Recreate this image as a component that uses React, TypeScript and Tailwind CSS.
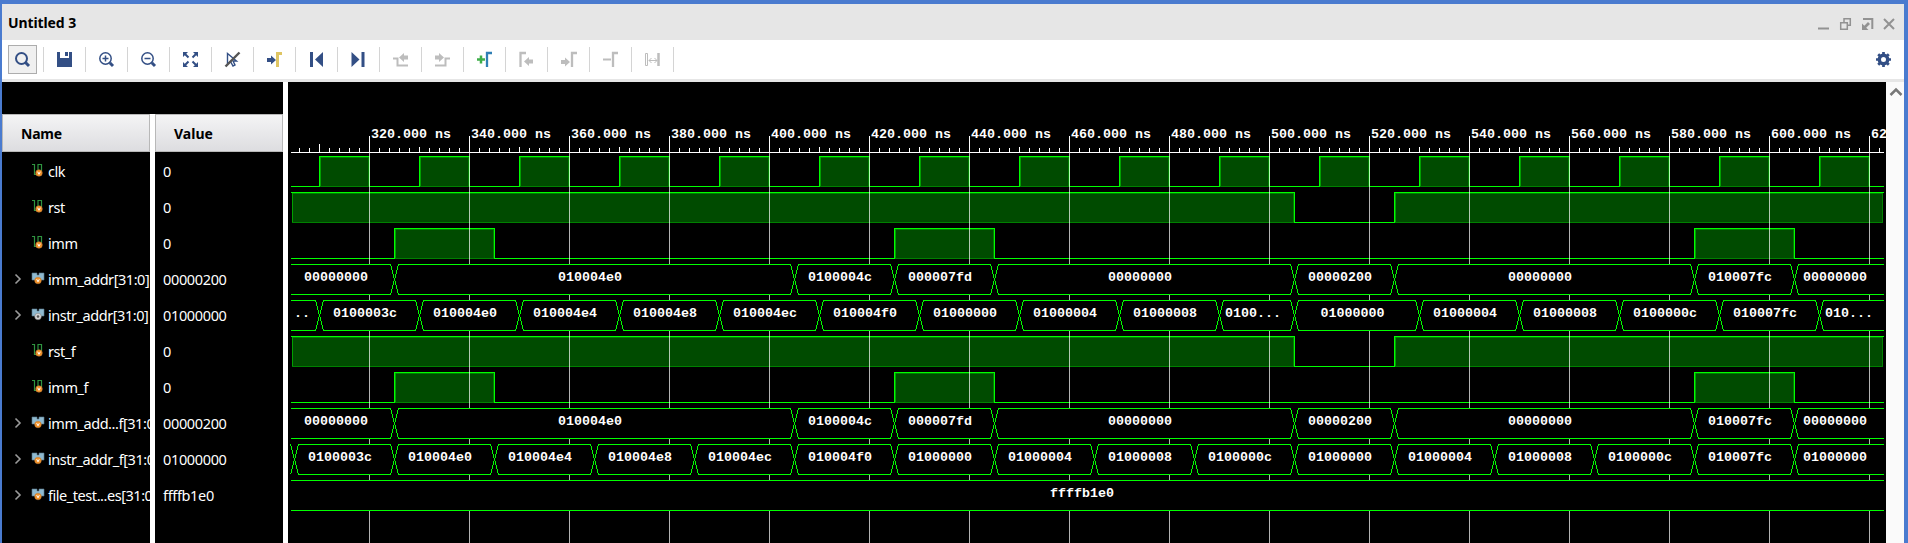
import React from "react";

type Seg = { to: number; label: string; at?: number };
type Signal = {
  name: string;
  value: string;
  kind: "bit" | "bus" | "busReg";
  high?: [number, number][];
  start?: number;
  segs?: Seg[];
};

const X0 = 291;
const X1 = 1884;
const clkHigh: [number, number][] = Array.from({ length: 16 }, (_, i) => [319 + i * 100, 369 + i * 100]);
const rstHigh: [number, number][] = [[X0, 1294], [1394, X1]];
const immHigh: [number, number][] = [[394, 494], [894, 994], [1694, 1794]];
const immSegs: Seg[] = [
  { to: 394, label: "00000000", at: 304 },
  { to: 794, label: "010004e0" },
  { to: 894, label: "0100004c" },
  { to: 994, label: "000007fd" },
  { to: 1294, label: "00000000" },
  { to: 1394, label: "00000200" },
  { to: 1694, label: "00000000" },
  { to: 1794, label: "010007fc" },
  { to: X1, label: "00000000" },
];
const instrSegs: Seg[] = [
  { to: 319, label: "..", at: 294 },
  { to: 419, label: "0100003c" },
  { to: 519, label: "010004e0" },
  { to: 619, label: "010004e4" },
  { to: 719, label: "010004e8" },
  { to: 819, label: "010004ec" },
  { to: 919, label: "010004f0" },
  { to: 1019, label: "01000000" },
  { to: 1119, label: "01000004" },
  { to: 1219, label: "01000008" },
  { to: 1294, label: "0100...", at: 1225 },
  { to: 1419, label: "01000000" },
  { to: 1519, label: "01000004" },
  { to: 1619, label: "01000008" },
  { to: 1719, label: "0100000c" },
  { to: 1819, label: "010007fc" },
  { to: X1, label: "010...", at: 1825 },
];
const instrFSegs: Seg[] = [
  "0100003c", "010004e0", "010004e4", "010004e8", "010004ec", "010004f0", "01000000", "01000004",
  "01000008", "0100000c", "01000000", "01000004", "01000008", "0100000c", "010007fc", "01000000",
].map((label, i) => ({ to: i === 15 ? X1 : 394 + i * 100, label }));

const signals: Signal[] = [
  { name: "clk", value: "0", kind: "bit", high: clkHigh },
  { name: "rst", value: "0", kind: "bit", high: rstHigh },
  { name: "imm", value: "0", kind: "bit", high: immHigh },
  { name: "imm_addr[31:0]", value: "00000200", kind: "bus", segs: immSegs },
  { name: "instr_addr[31:0]", value: "01000000", kind: "busReg", segs: instrSegs },
  { name: "rst_f", value: "0", kind: "bit", high: rstHigh },
  { name: "imm_f", value: "0", kind: "bit", high: immHigh },
  { name: "imm_add...f[31:0]", value: "00000200", kind: "bus", segs: immSegs },
  { name: "instr_addr_f[31:0]", value: "01000000", kind: "bus", start: 294, segs: instrFSegs },
  { name: "file_test...es[31:0]", value: "ffffb1e0", kind: "bus", segs: [{ to: X1, label: "ffffb1e0", at: 1050 }] },
];

const BLUE = "#334f85";
const GREY = "#bdbdbd";

function BitWave({ y, high }: { y: number; high: [number, number][] }) {
  const b = y + 30;
  let d = "";
  let x = X0;
  high.forEach(([a, c]) => {
    if (a > X0) d += `M${x} ${b + 0.5}H${a + 0.5}V${y + 0.5}`;
    else d += `M${X0} ${y + 0.5}`;
    d += `H${c === X1 ? X1 : c + 0.5}`;
    if (c !== X1) d += `V${b + 0.5}`;
    x = c;
  });
  if (x !== X1) d += `M${x} ${b + 0.5}H${X1}`;
  return (
    <g shapeRendering="crispEdges">
      {high.map(([a, c]) => {
        const l = a + 1;
        const r = c === X1 ? X1 - 1 : c;
        return (
          <g key={a}>
            <rect x={l} y={y + 1} width={r - l} height={30} fill="#008000" />
            <rect x={l} y={y + 1} width={1} height={29} fill="#00a000" />
            <rect x={l + 1} y={y + 2} width={r - l - 2} height={28} fill="#004b00" />
          </g>
        );
      })}
      <path d={d} fill="none" stroke="#00ff00" />
    </g>
  );
}

function BusWave({ y, start, segs }: { y: number; start?: number; segs: Seg[] }) {
  const t = y + 0.5;
  const b = y + 30.5;
  const cuts = segs.slice(0, -1).map((s) => s.to);
  if (start) cuts.unshift(start);
  let d = "";
  let x = X0;
  cuts.forEach((c) => {
    if (c - 4 > x) d += `M${x} ${t}H${c - 3}M${x} ${b}H${c - 3}`;
    const m = c + 0.5;
    d += `M${m - 4} ${t}L${m - 2} ${y + 8}L${m + 2} ${y + 23}L${m + 4} ${b}`;
    d += `M${m - 4} ${b}L${m - 2} ${y + 23}L${m + 2} ${y + 8}L${m + 4} ${t}`;
    x = c + 4;
  });
  d += `M${x} ${t}H${X1}M${x} ${b}H${X1}`;
  return (
    <g>
      <rect x={X0} y={y} width={X1 - X0} height={31} fill="#000" />
      <path d={d} fill="none" stroke="#00ff00" shapeRendering="crispEdges" />
      {segs.map((s, i) => {
        const from = i === 0 ? start ?? X0 : segs[i - 1].to;
        return (
          <text key={i} x={s.at ?? (from + s.to) / 2 - 36} y={y + 17}>
            {s.label}
          </text>
        );
      })}
    </g>
  );
}

function Waves() {
  const ticks = Array.from({ length: 159 }, (_, i) => 299 + i * 10);
  const majors = Array.from({ length: 16 }, (_, i) => 369 + i * 100);
  return (
    <svg
      width="1598"
      height="461"
      viewBox="288 82 1598 461"
      className="block bg-black font-['Liberation_Mono',monospace] text-[13.33px] font-bold"
      fill="#fff"
      xmlSpace="preserve"
    >
      <rect x={X0} y={152} width={X1 - X0} height={1} />
      {ticks.map((x) => {
        const major = x % 100 === 69;
        const top = major ? 136 : x === 319 ? 144 : x % 100 === 19 ? 147 : 148;
        return <rect key={x} x={x} y={top} width={1} height={152 - top} />;
      })}
      {majors.map((x, i) => (
        <text key={x} x={x + 2} y={138}>
          {`${320 + i * 20}.000 ns`}
        </text>
      ))}
      {signals.map((s, i) => s.high && <BitWave key={i} y={156 + i * 36} high={s.high} />)}
      {majors.map((x) => (
        <rect key={x} x={x} y={153} width={1} height={390} fillOpacity={0.7} />
      ))}
      {signals.map((s, i) => s.segs && <BusWave key={i} y={156 + i * 36} start={s.start} segs={s.segs} />)}
    </svg>
  );
}

function SignalIcon({ kind }: { kind: Signal["kind"] }) {
  const reg = kind === "busReg";
  return (
    <svg width="14" height="14" viewBox="0 0 14 14" className="shrink-0">
      {kind === "bit" ? (
        <path d="M1 1.5H3.5V11.5H7V1.5H10.500V8" fill="none" stroke="#2f9440" strokeWidth="1.2" />
      ) : (
        <path d="M1 2H6V4H8V2H13V9H10L7 11L4 9H1Z" fill="#8fb9cf" stroke="#58778a" strokeWidth=".6" />
      )}
      <circle cx={kind === "bit" ? 8 : 7} cy={kind === "bit" ? 10 : 9.500} r="3.300" fill={reg ? "#d5d5d5" : "#f39228"} stroke={reg ? "#777" : "#b87838"} strokeWidth=".5" />
      {reg ? (
        <circle cx="7" cy="9.500" r="1.300" fill="#555" />
      ) : (
        <path d={kind === "bit" ? "M6.700 8.700L8 11.300L9.300 8.700" : "M5.700 8.200L7 10.800L8.300 8.200"} fill="none" stroke="#fff" />
      )}
    </svg>
  );
}

const tools: React.ReactNode[] = [
  <g fill="none" stroke={BLUE} strokeWidth="2"><circle cx="6.500" cy="6.500" r="5.500" /><path d="M10.500 10.500L14 14" strokeWidth="3" /></g>,
  <path d="M0 0H3V6H12V0H15V15H0ZM8 0H11V4H8Z" fill={BLUE} fillRule="evenodd" />,
  <g fill="none" stroke={BLUE} strokeWidth="1.500"><circle cx="6.500" cy="6.500" r="5.700" /><path d="M10.800 10.800L14 14" strokeWidth="3" /><path d="M3.500 6.500H9.500M6.500 3.500V9.500" /></g>,
  <g fill="none" stroke={BLUE} strokeWidth="1.500"><circle cx="6.500" cy="6.500" r="5.700" /><path d="M10.800 10.800L14 14" strokeWidth="3" /><path d="M3.500 6.500H9.500" /></g>,
  <g fill={BLUE}><path d="M0 0H5L0 5ZM15 0V5L10 0ZM0 15V10L5 15ZM15 15H10L15 10Z" /><path d="M2 2L5.500 5.500M13 2L9.500 5.500M2 13L5.500 9.500M13 13L9.500 9.500" stroke={BLUE} strokeWidth="2" /></g>,
  <g fill="none"><path d="M2.500 1.500V12L5.500 9.500L8 14L10 13L8 9H11.500Z" stroke={BLUE} strokeWidth="1.400" /><path d="M.5 14.500L14.500 .5" stroke="#555" strokeWidth="2.400" /></g>,
  <g><path d="M0 6H4V3.500L9 8L4 12.500V10H0Z" fill={BLUE} /><path d="M10.500 15V1.500H15" fill="none" stroke="#dfc563" strokeWidth="3" /></g>,
  <path d="M1 0H4V15H1ZM14 0V15L6 7.500Z" fill={BLUE} />,
  <path d="M10.500 0H13.500V15H10.500ZM.5 0V15L8.500 7.500Z" fill={BLUE} />,
  <g><path d="M0 6.500H4.500V13.500H15" fill="none" stroke={GREY} strokeWidth="2" /><path d="M15 3.500H11V1L6 5.500L11 10V7.500H15Z" fill={GREY} /></g>,
  <g><path d="M15 6.500H10.500V13.500H0" fill="none" stroke={GREY} strokeWidth="2" /><path d="M0 3.500H4V1L9 5.500L4 10V7.500H0Z" fill={GREY} /></g>,
  <g fill="none"><path d="M0 7.500H8M4 3.500V11.500" stroke="#3fae49" strokeWidth="2.500" /><path d="M10 15V1H15" stroke="#2f7fb5" strokeWidth="2.300" /></g>,
  <g><path d="M1.500 15V1H7" fill="none" stroke={GREY} strokeWidth="2.300" /><path d="M14 7.500H10V5L5 9.500L10 14V11.500H14Z" fill={GREY} /></g>,
  <g><path d="M11 15V1H16" fill="none" stroke={GREY} strokeWidth="2.300" /><path d="M0 8H4V5.500L9 10L4 14.500V12H0Z" fill={GREY} /></g>,
  <g fill="none" stroke={GREY}><path d="M0 7.500H8" strokeWidth="2" /><path d="M10 15V1H15" strokeWidth="2.300" /></g>,
  <g fill="none" stroke={GREY}><path d="M.5 1.500H2.500V13.500H.5ZM4 8.500H12M6.500 6L4 8.500L6.500 11M9.500 6L12 8.500L9.500 11" /><path d="M13.500 1V14" strokeWidth="2.500" /></g>,
];

export default function App() {
  return (
    <div className="flex h-[543px] w-[1908px] flex-col overflow-hidden border-t-4 border-r-4 border-l-2 border-[#4a7bcf] bg-white font-['Noto_Sans',sans-serif] text-black">
      <header className="flex h-9 shrink-0 items-center justify-between bg-[#e6e6e6] pr-2 pl-[6px]">
        <h1 className="text-[14px] font-bold tracking-[-0.1px]">Untitled 3</h1>
        <svg width="79" height="14" viewBox="0 0 79 14" className="mt-1" fill="none" stroke="#929292" strokeWidth="1.500">
          <path d="M1 11.500H12" strokeWidth="2" />
          <path d="M23.700 5.700H30.300V12.300H23.700ZM27 5V1.700H33.300V8.300H31" />
          <path d="M46 2H55.300V12" strokeWidth="2" /><path d="M45 13V6.500L47.300 8.800L51 5L53 7L49.200 10.700L51.500 13Z" fill="#929292" stroke="none" />
          <path d="M67 2L77 12M77 2L67 12" strokeWidth="2" />
        </svg>
      </header>
      <nav className="flex h-[42px] shrink-0 items-center justify-between border-b-[3px] border-[#e6e6e6] pr-[13px] pl-[6px]">
        <div className="flex items-center">
          {tools.map((icon, i) => (
            <div key={i} className="flex w-[42px] items-center">
              <div className={`flex size-[29px] items-center justify-center ${i === 0 ? "border border-[#adadad] bg-[#f0f0f0]" : ""}`}>
                <svg width="15" height="15" viewBox="0 0 15 15" className="overflow-visible">{icon}</svg>
              </div>
              <div className="ml-[6px] h-[25px] w-px bg-[#d4d4d4]" />
            </div>
          ))}
        </div>
        <svg width="15" height="15" viewBox="0 0 15 15">
          <circle cx="7.500" cy="7.500" r="4.200" fill="none" stroke={BLUE} strokeWidth="3.400" />
          <path d="M7.500 0V3M7.500 12V15M0 7.500H3M12 7.500H15M2.200 2.200L4.300 4.300M10.700 10.700L12.800 12.800M2.200 12.800L4.300 10.700M10.700 4.300L12.800 2.200" stroke={BLUE} strokeWidth="2.700" />
        </svg>
      </nav>
      <main className="flex h-[461px] shrink-0">
        <section className="w-[281px] shrink-0">
          <div className="h-8 bg-black" />
          <div className="flex h-[429px] justify-between">
            <div className="w-[148px] overflow-hidden bg-black text-[14.500px] tracking-[-0.45px] text-white">
              <div className="flex h-[38px] items-center border border-[#b8b8b8] bg-linear-to-b from-[#f4f4f5] to-[#dddde0] pl-[18px] text-[14px] font-bold tracking-[-0.2px] text-black">Name</div>
              <ul>
                {signals.map((s) => (
                  <li key={s.name} className="flex h-9 items-center whitespace-nowrap">
                    <svg width="8" height="12" viewBox="0 0 8 12" className="mt-[2px] mr-[9px] ml-3 shrink-0" fill="none">
                      {s.kind !== "bit" && <path d="M1.500 1.500L6 6L1.500 10.500" stroke="#9a9a9a" strokeWidth="1.600" />}
                    </svg>
                    <SignalIcon kind={s.kind} />
                    <span className="ml-[3px] pt-[3px]">{s.name}</span>
                  </li>
                ))}
              </ul>
            </div>
            <div className="w-[128px] bg-black text-[14.500px] tracking-[-0.35px] text-white">
              <div className="flex h-[38px] items-center border border-[#b8b8b8] bg-linear-to-b from-[#f4f4f5] to-[#dddde0] pl-[18px] text-[14px] font-bold tracking-normal text-black">Value</div>
              <ul>
                {signals.map((s) => (
                  <li key={s.name} className="flex h-9 items-center pt-[3px] pl-2">{s.value}</li>
                ))}
              </ul>
            </div>
          </div>
        </section>
        <section className="ml-[5px] w-[1598px] shrink-0">
          <Waves />
        </section>
        <aside className="flex w-[18px] justify-center bg-[#fafafa] pt-[5px]">
          <svg width="14" height="10" viewBox="0 0 14 10" className="ml-[2px]" fill="none">
            <path d="M1.500 8L7 2.500L12.500 8" stroke="#777" strokeWidth="2.500" />
          </svg>
        </aside>
      </main>
    </div>
  );
}
